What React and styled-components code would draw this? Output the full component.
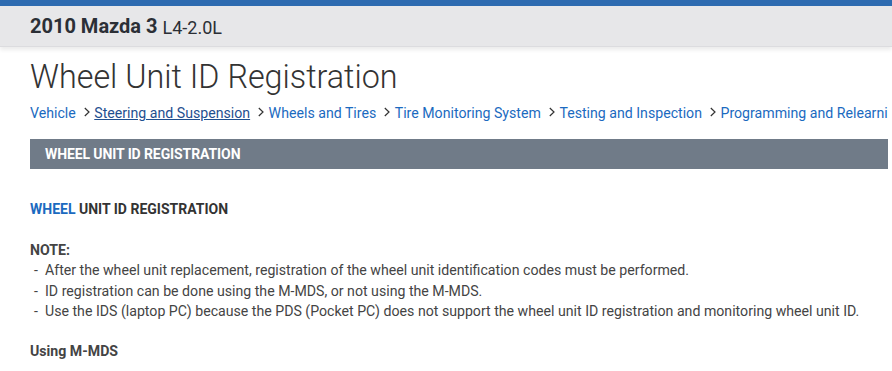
import React from "react";
import styled, { createGlobalStyle } from "styled-components";

const GlobalStyle = createGlobalStyle`
  html, body {
    margin: 0;
    padding: 0;
    background: #fff;
    font-family: Roboto, "Liberation Sans", Arial, sans-serif;
    color: #333;
    overflow: hidden;
  }
`;

const crumbs = [
  "Vehicle",
  "Steering and Suspension",
  "Wheels and Tires",
  "Tire Monitoring System",
  "Testing and Inspection",
  "Programming and Relearning",
];

const notes = [
  "After the wheel unit replacement, registration of the wheel unit identification codes must be performed.",
  "ID registration can be done using the M-MDS, or not using the M-MDS.",
  "Use the IDS (laptop PC) because the PDS (Pocket PC) does not support the wheel unit ID registration and monitoring wheel unit ID.",
];

function Chevron() {
  return (
    <ChevronIcon width="6" height="10" viewBox="0 0 6 10">
      <path d="M0.8 1 L5 5 L0.8 9" fill="none" stroke="#333" strokeWidth="1.2" />
    </ChevronIcon>
  );
}

function App() {
  return (
    <>
      <GlobalStyle />
      <TopStrip />
      <VehicleBar>
        <VehicleName>2010 Mazda 3</VehicleName>
        <Engine>L4-2.0L</Engine>
      </VehicleBar>
      <Content>
        <Title>Wheel Unit ID Registration</Title>
        <Breadcrumbs>
          {crumbs.map((c, i) => (
            <Crumb key={c}>
              {i > 0 && <Chevron />}
              <CrumbLink $current={i === 1}>{c}</CrumbLink>
            </Crumb>
          ))}
        </Breadcrumbs>
        <SectionHeader>WHEEL UNIT ID REGISTRATION</SectionHeader>
        <Body>
          <Subtitle>
            <Highlight>WHEEL</Highlight> UNIT ID REGISTRATION
          </Subtitle>
          <NoteLabel>NOTE:</NoteLabel>
          <NoteList>
            {notes.map((n) => (
              <NoteItem key={n}>{n}</NoteItem>
            ))}
          </NoteList>
          <StepLabel>Using M-MDS</StepLabel>
        </Body>
      </Content>
    </>
  );
}

const TopStrip = styled.div`
  height: 6px;
  background: #2e6bb0;
`;

const VehicleBar = styled.div`
  height: 40px;
  background: #e7e7e9;
  display: flex;
  align-items: center;
  gap: 5px;
  padding: 0 30px;
  box-shadow: 0 3px 4px rgba(0, 0, 0, 0.08);
  border-bottom: 1px solid #dcdcdf;
`;

const VehicleName = styled.span`
  font-size: 20px;
  font-weight: 700;
  color: #2b2f36;
`;

const Engine = styled.span`
  font-size: 18px;
  color: #2b2f36;
  padding-top: 2px;
`;

const Content = styled.div`
  padding: 11px 4px 0 30px;
`;

const Title = styled.h1`
  margin: 0;
  font-size: 32.3px;
  font-weight: 300;
  line-height: 38px;
  color: #333;
`;

const Breadcrumbs = styled.div`
  display: flex;
  white-space: nowrap;
  overflow: hidden;
  margin-top: 8px;
  font-size: 14.15px;
  line-height: 18px;
`;

const Crumb = styled.span`
  display: inline-flex;
  align-items: center;
`;

const ChevronIcon = styled.svg`
  flex: none;
  margin: 0 4.5px 0 8px;
  position: relative;
  top: -1px;
`;

const CrumbLink = styled.span`
  color: ${(p) => (p.$current ? "#1f4f8f" : "#1b6ac0")};
  text-decoration: ${(p) => (p.$current ? "underline" : "none")};
`;

const SectionHeader = styled.div`
  margin-top: 17px;
  height: 30px;
  background: #707b88;
  color: #fff;
  font-size: 14px;
  font-weight: 700;
  letter-spacing: -0.1px;
  display: flex;
  align-items: center;
  padding-left: 15px;
`;

const Body = styled.div`
  padding-top: 30px;
  font-size: 14.15px;
`;

const Subtitle = styled.div`
  font-weight: 700;
  font-size: 14px;
  color: #333;
  line-height: 20px;
`;

const Highlight = styled.span`
  color: #1b6ac0;
`;

const NoteLabel = styled.div`
  margin-top: 21px;
  font-weight: 700;
  line-height: 20px;
  color: #444;
`;

const NoteList = styled.ul`
  list-style: none;
  margin: 0;
  padding: 0;
`;

const NoteItem = styled.li`
  line-height: 20.5px;
  color: #444;
  padding-left: 15px;
  position: relative;
  &::before {
    content: "-";
    position: absolute;
    left: 4px;
  }
`;

const StepLabel = styled.div`
  margin-top: 19px;
  font-weight: 700;
  line-height: 20px;
  color: #444;
`;

export default App;
